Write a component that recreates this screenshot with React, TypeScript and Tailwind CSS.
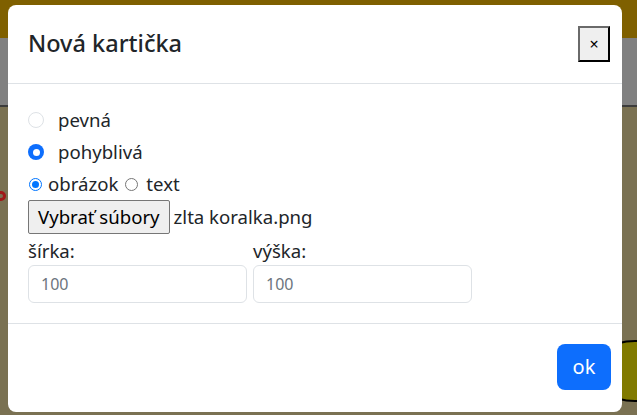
import React from "react";

const font = { fontFamily: '"Noto Sans", "Segoe UI", sans-serif' };

function BsRadio({ checked, label }: { checked?: boolean; label: string }) {
  return (
    <div className="flex h-[32px] items-center">
      {checked ? (
        <span className="flex h-[16px] w-[16px] shrink-0 items-center justify-center rounded-full bg-[#0d6efd]">
          <span className="block h-[7px] w-[7px] rounded-full bg-white" />
        </span>
      ) : (
        <span className="block h-[16px] w-[16px] shrink-0 rounded-full border border-[#dee2e6] bg-white" />
      )}
      <span className="ml-[14px] text-[18.6px] text-[#212529]">{label}</span>
    </div>
  );
}

function NativeRadio({ checked }: { checked?: boolean }) {
  return checked ? (
    <span className="flex h-[13px] w-[13px] shrink-0 items-center justify-center rounded-full border border-[#0075ff] bg-white">
      <span className="block h-[7px] w-[7px] rounded-full bg-[#0075ff]" />
    </span>
  ) : (
    <span className="block h-[13px] w-[13px] shrink-0 rounded-full border border-[#767676] bg-white" />
  );
}

export default function App() {
  return (
    <div className="relative h-[415px] w-[637px] overflow-hidden" style={font}>
      <div className="flex h-full flex-col">
        <div className="h-[38px] bg-[#7f6000]" />
        <div className="h-[67px] bg-[#808080]" />
        <div className="h-[2px] bg-[#3c3c3c]" />
        <div className="flex-1 bg-[#7a7152]" />
      </div>
      <div className="absolute left-[-6px] top-[191px] h-[10px] w-[12px] rounded-full border-[3px] border-[#a01818]" />
      <div className="absolute left-[590px] top-[340px] h-[62px] w-[90px] rounded-[50%] border-2 border-black bg-[#807a00]" />

      <div className="absolute left-[8px] top-[5px] flex h-[407px] w-[614px] flex-col rounded-[8px] bg-white text-[#212529]">
        <div className="flex h-[79px] items-center justify-between border-b border-[#dee2e6] pl-[20px] pr-[12px]">
          <div className="text-[23.5px] font-medium leading-none">Nová kartička</div>
          <button className="flex h-[36px] w-[32px] items-center justify-center border-2 border-b-black border-l-[#6a6a6a] border-r-black border-t-[#6a6a6a] bg-[#efefef] text-[16px] leading-none text-black">
            ×
          </button>
        </div>

        <div className="flex flex-col px-[20px] pt-[20px] pb-[20px]">
          <BsRadio label="pevná" />
          <BsRadio checked label="pohyblivá" />
          <div className="flex h-[32px] items-center text-[18.6px]">
            <span className="ml-[1px]"><NativeRadio checked /></span>
            <span className="ml-[6px]">obrázok</span>
            <span className="ml-[7px]"><NativeRadio /></span>
            <span className="ml-[8px]">text</span>
          </div>
          <div className="flex h-[34px] items-center">
            <button className="flex h-[34px] items-center rounded-[2px] border border-[#767676] bg-[#efefef] px-[9px] text-[18.6px] text-black">
              Vybrať súbory
            </button>
            <span className="ml-[4px] text-[18.6px]">zlta koralka.png</span>
          </div>
          <div className="mt-[2px] flex gap-[6px]">
            <div className="flex w-[219px] flex-col">
              <span className="h-[29px] text-[18.6px] leading-[29px]">šírka:</span>
              <input
                placeholder="100"
                className="h-[38px] w-full rounded-[6px] border border-[#dee2e6] px-[12px] text-[16px] placeholder:text-[#6c757d] outline-none"
              />
            </div>
            <div className="flex w-[219px] flex-col">
              <span className="h-[29px] text-[18.6px] leading-[29px]">výška:</span>
              <input
                placeholder="100"
                className="h-[38px] w-full rounded-[6px] border border-[#dee2e6] px-[12px] text-[16px] placeholder:text-[#6c757d] outline-none"
              />
            </div>
          </div>
        </div>

        <div className="flex flex-1 items-start justify-end border-t border-[#dee2e6] pr-[11px] pt-[20px]">
          <button className="flex h-[46px] w-[54px] items-center justify-center rounded-[8px] bg-[#0d6efd] text-[20px] text-white">
            ok
          </button>
        </div>
      </div>
    </div>
  );
}
